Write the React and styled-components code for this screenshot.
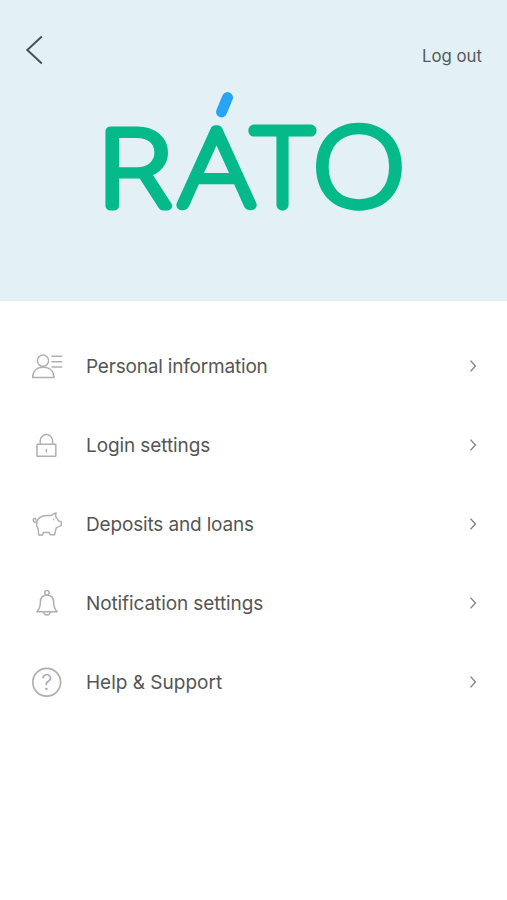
import styled, { createGlobalStyle } from 'styled-components'

const GlobalStyle = createGlobalStyle`
  * {
    box-sizing: border-box;
  }
  body {
    margin: 0;
    background: #fff;
    font-family: Inter, 'Liberation Sans', sans-serif;
  }
`

const Screen = styled.div`
  width: 100%;
  max-width: 507px;
  min-height: 900px;
  background: #fff;
`

const Header = styled.header`
  height: 301px;
  background: #e3f1f6;
`

const TopBar = styled.div`
  display: flex;
  justify-content: space-between;
  align-items: flex-start;
  height: 74px;
  padding: 34px 25px 0 24px;
`

const IconButton = styled.button`
  display: flex;
  padding: 0;
  border: 0;
  background: none;
`

const LogoutButton = styled.button`
  padding: 0;
  margin-top: 11px;
  border: 0;
  background: none;
  color: #525c5f;
  font-family: inherit;
  font-size: 16.8px;
  line-height: 22px;
`

const Logo = styled.svg`
  display: block;
  margin: 0 auto;
`

const LogoLetter = styled.text`
  font-family: ${(props) => props.$font}, sans-serif;
  font-weight: 100;
  font-size: ${(props) => props.$size}px;
  fill: #04b98a;
  stroke: #04b98a;
  stroke-width: ${(props) => props.$weight}px;
  stroke-linecap: round;
  stroke-linejoin: round;
  vector-effect: non-scaling-stroke;
`

const Menu = styled.ul`
  list-style: none;
  margin: 0;
  padding: 25px 29px 0 31px;
`

const MenuItem = styled.li`
  display: flex;
  align-items: center;
  height: 79px;
`

const MenuIcon = styled.svg`
  flex: none;
  width: 32px;
  height: 32px;
  fill: none;
  stroke: #b0b0b0;
  stroke-width: ${(props) => props.$weight || 1.5};
  stroke-linecap: round;
  stroke-linejoin: round;
`

const QuestionMark = styled.text`
  font-size: 22px;
  font-weight: 300;
  fill: #a6a6a6;
  stroke: none;
`

const Label = styled.span`
  flex: 1;
  margin-left: 23px;
  padding-top: 2px;
  color: #555;
  font-size: 19px;
  line-height: 24px;
  letter-spacing: ${(props) => props.$tracking}px;
`

function PersonIcon() {
  return <MenuIcon viewBox="0 0 32 32">
    <circle cx="12" cy="10.7" r="5.6" />
    <path d="M1.6 27.5C1.8 21 6 17.3 12.2 17.3S22.8 21 23 27.5Z" />
    <path d="M21 6.3h9.7M21 11.7h9.7M21 17h9.7" />
  </MenuIcon>
}

function LockIcon() {
  return <MenuIcon viewBox="0 0 32 32">
    <rect x="6" y="15.3" width="18.8" height="12" rx="0.6" />
    <path d="M9.2 15V12a6.2 6.4 0 0 1 12.4 0v3" />
    <path d="M15.4 20.5v2.6" />
  </MenuIcon>
}

function PigIcon() {
  return <MenuIcon viewBox="0 0 32 32">
    <path d="M5.7 14.4C3 14.6 1.8 12.7 2.4 11.2c.7-1.3 2.8-.7 2.5.9" />
    <path d="M5.7 14.4C6.3 11.4 8.5 9.3 11.3 8.2c3-.9 6-.9 9.2-.6 1-1.6 2.6-2.3 4.6-2.6-.6 1.5-.6 2.9 0 4.3 1.3 1 1.9 2.2 2.4 3.6l2.7.8v3.900c-1.600.6-3.100 1.400-5 2.400l-1.600 6.700h-4.400l-.9-2.300h-5.900l-.9 2.600H7.700L7.200 21C5.800 19 5.200 17 5.700 14.400Z" />
    <path d="M22.5 11.6v.2" />
  </MenuIcon>
}

function BellIcon() {
  return <MenuIcon viewBox="0 0 32 32">
    <circle cx="16" cy="5.7" r="2.2" />
    <path d="M16 8.2c-4.300 0-6.600 2.600-6.600 6.600 0 4.800-.6 7.200-3.600 9.900h20.400c-3-2.700-3.600-5.100-3.600-9.900 0-4-2.300-6.600-6.600-6.600Z" />
    <path d="M12.7 25c.3 1.900 1.600 3 3.300 3s3-1.100 3.300-3" />
  </MenuIcon>
}

function HelpIcon() {
  return <MenuIcon viewBox="0 0 32 32" $weight={1.7}>
    <circle cx="15.7" cy="16.2" r="13.9" />
    <QuestionMark x="15.8" y="24.2" textAnchor="middle">?</QuestionMark>
  </MenuIcon>
}

const logoLetters = [
  { letter: 'R', x: 97, y: 205.6, stretch: 1.19, size: 103, font: 'Inter', weight: 10 },
  { letter: 'A', x: 179.5, y: 205.3, stretch: 1.097, size: 106, font: 'Lato', weight: 10.8 },
  { letter: 'T', x: 252.2, y: 205.3, stretch: 1, size: 106, font: 'Lato', weight: 10.8 },
  { letter: 'O', x: 313.8, y: 204.5, stretch: 1.072, size: 107.5, font: 'Lato', weight: 10.8 },
]

const items = [
  { label: 'Personal information', tracking: -0.19, Icon: PersonIcon },
  { label: 'Login settings', tracking: -0.1, Icon: LockIcon },
  { label: 'Deposits and loans', tracking: -0.16, Icon: PigIcon },
  { label: 'Notification settings', tracking: -0.1, Icon: BellIcon },
  { label: 'Help & Support', tracking: 0, Icon: HelpIcon },
]

export default function App() {
  return <>
    <GlobalStyle />
    <Screen>
      <Header>
        <TopBar>
          <IconButton aria-label="Back">
            <svg width="20" height="32" viewBox="0 0 20 32" fill="none" stroke="#475255" strokeWidth="2">
              <path d="M17.8 2.5 3.3 16l14.5 13.5" />
            </svg>
          </IconButton>
          <LogoutButton>Log out</LogoutButton>
        </TopBar>
        <Logo width="347" height="176" viewBox="80 74 347 176">
          {
            logoLetters.map(({ letter, x, y, stretch, size, font, weight }) => (
              <LogoLetter
                key={letter}
                $font={font}
                $size={size}
                $weight={weight}
                transform={`translate(${x} ${y}) scale(${stretch} 1)`}
              >
                {letter}
              </LogoLetter>
            ))
          }
          {/* accent over the A */}
          <line x1="227.5" y1="97.5" x2="221.5" y2="112" stroke="#27a5f2" strokeWidth="11" strokeLinecap="round" />
        </Logo>
      </Header>
      <Menu>
        {
          items.map(({ label, tracking, Icon }) => (
            <MenuItem key={label}>
              <Icon />
              <Label $tracking={tracking}>{label}</Label>
              <svg width="10" height="14" viewBox="0 0 10 14" fill="none" stroke="#858585" strokeWidth="1.4">
                <path d="M2.5 1.6 7.4 7l-4.9 5.4" />
              </svg>
            </MenuItem>
          ))
        }
      </Menu>
    </Screen>
  </>
}
